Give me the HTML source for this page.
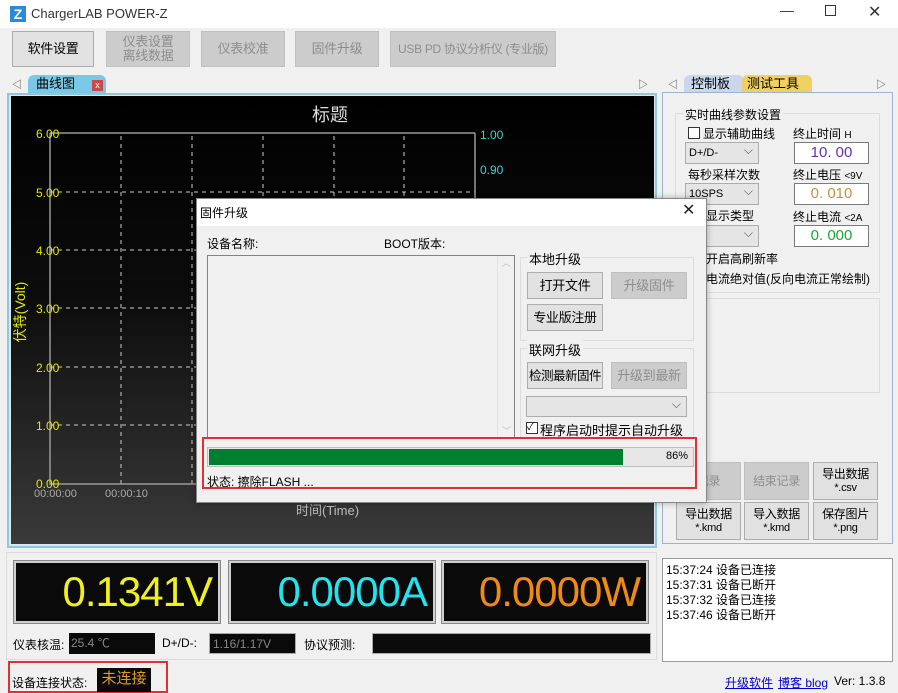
<!DOCTYPE html>
<html><head><meta charset="utf-8"><style>
*{box-sizing:border-box;margin:0;padding:0}
body{width:898px;height:693px;background:#f0f0f0;font-family:"Liberation Sans","Noto Sans CJK SC",sans-serif;font-size:12px;color:#000;position:relative;overflow:hidden}
.a{position:absolute}
.btn{position:absolute;background:#e1e1e1;border:1px solid #adadad;display:flex;flex-direction:column;align-items:center;justify-content:center;text-align:center;font-size:12px;line-height:14px;white-space:nowrap;letter-spacing:-0.3px}
.dis{background:#cccccc;border-color:#bfbfbf;color:#8d8d8d}
.y{color:#e6e600;font-size:12px}
.c{color:#33d6d6;font-size:12px}
.disp{position:absolute;background:#0a0a0a;border:2px solid #cfcfcf;outline:1px solid #888;font-size:42px;text-align:right;padding-right:6px;line-height:58px;font-family:"Liberation Sans",sans-serif;letter-spacing:-1px}
.inp{position:absolute;background:#fff;border:1px solid #7a7a7a;text-align:center;font-size:15px;line-height:20px}
.sel{position:absolute;background:#e5e5e5;border:1px solid #acacac;font-size:11px;line-height:20px;padding-left:3px}
.sel:after{content:"⌵";position:absolute;right:5px;top:-3px;color:#555;font-size:12px}
</style></head><body>
<div class="a" style="left:0;top:0;width:898px;height:28px;background:#fff"></div>
<div class="a" style="left:10px;top:6px;width:16px;height:16px;background:#2a8ad8;color:#fff;font-weight:bold;font-size:14px;line-height:16px;text-align:center">Z</div>
<div class="a" style="left:31px;top:6px;font-size:13px;color:#333">ChargerLAB POWER-Z</div>
<div class="a" style="left:780px;top:2px;font-size:14px;color:#333">—</div>
<div class="a" style="left:825px;top:5px;width:11px;height:11px;border:1px solid #333"></div>
<div class="a" style="left:868px;top:2px;font-size:16px;color:#333">✕</div>
<div class="btn" style="left:12px;top:31px;width:82px;height:36px;font-size:13px">软件设置</div>
<div class="btn dis" style="left:106px;top:31px;width:84px;height:36px;font-size:13px">仪表设置<br>离线数据</div>
<div class="btn dis" style="left:201px;top:31px;width:84px;height:36px;font-size:13px">仪表校准</div>
<div class="btn dis" style="left:295px;top:31px;width:84px;height:36px;font-size:13px">固件升级</div>
<div class="btn dis" style="left:390px;top:31px;width:166px;height:36px;font-size:12px">USB PD 协议分析仪 (专业版)</div>
<div class="a" style="left:12px;top:76px;font-size:10px;color:#444">◁</div>
<div class="a" style="left:28px;top:75px;width:78px;height:18px;background:#79c8e6;border-radius:6px 6px 0 0;font-size:13px;padding-left:8px;line-height:17px">曲线图</div>
<div class="a" style="left:92px;top:80px;width:11px;height:11px;background:#c84a4a;color:#fff;font-size:9px;line-height:10px;text-align:center">x</div>
<div class="a" style="left:638px;top:76px;font-size:10px;color:#444">▷</div>
<div class="a" style="left:7px;top:93px;width:650px;height:455px;border:2px solid #8fc7dc;background:#d8e8ee"></div>
<div class="a" style="left:11px;top:96px;width:643px;height:448px;background:linear-gradient(#000 0%,#0c0c0c 45%,#3a3a3a 100%)"></div>
<div class="a" style="left:312px;top:101px;font-size:18px;color:#ddd">标题</div>
<svg class="a" style="left:0;top:0" width="660" height="550">
<g stroke="#ccc" stroke-dasharray="4,4" stroke-width="1">
<line x1="121" y1="136" x2="121" y2="484"/><line x1="192" y1="136" x2="192" y2="484"/><line x1="263" y1="136" x2="263" y2="484"/><line x1="334" y1="136" x2="334" y2="484"/><line x1="404" y1="136" x2="404" y2="484"/>
<line x1="50" y1="192" x2="475" y2="192"/><line x1="50" y1="250" x2="475" y2="250"/><line x1="50" y1="308" x2="475" y2="308"/><line x1="50" y1="367" x2="475" y2="367"/><line x1="50" y1="425" x2="475" y2="425"/>
</g>
<g stroke="#999" stroke-width="1.5" fill="none"><polyline points="50,133 50,484 475,484"/><line x1="50" y1="133" x2="475" y2="133"/><line x1="475" y1="133" x2="475" y2="484"/></g>
</svg>
<div class="a y" style="left:36px;top:127px">6.00</div>
<div class="a y" style="left:36px;top:186px">5.00</div>
<div class="a y" style="left:36px;top:244px">4.00</div>
<div class="a y" style="left:36px;top:302px">3.00</div>
<div class="a y" style="left:36px;top:361px">2.00</div>
<div class="a y" style="left:36px;top:419px">1.00</div>
<div class="a y" style="left:36px;top:477px">0.00</div>
<div class="a c" style="left:480px;top:128px">1.00</div>
<div class="a c" style="left:480px;top:163px">0.90</div>
<div class="a" style="left:-17px;top:304px;transform:rotate(-90deg);color:#e6e600;font-size:14px;width:74px;text-align:center;line-height:16px">伏特(Volt)</div>
<div class="a" style="left:34px;top:488px;color:#aaa;font-size:11px">00:00:00</div>
<div class="a" style="left:105px;top:488px;color:#aaa;font-size:11px">00:00:10</div>
<div class="a" style="left:296px;top:500px;color:#bbb;font-size:13px">时间(Time)</div>
<div class="a" style="left:668px;top:76px;font-size:10px;color:#444">◁</div>
<div class="a" style="left:684px;top:75px;width:60px;height:18px;background:#c9d7ee;border-radius:6px 6px 0 0;font-size:13px;padding-left:7px;line-height:17px">控制板</div>
<div class="a" style="left:742px;top:75px;width:70px;height:18px;background:#f0d060;border-radius:6px 6px 0 0;font-size:13px;padding-left:5px;line-height:17px">测试工具</div>
<div class="a" style="left:876px;top:76px;font-size:10px;color:#444">▷</div>
<div class="a" style="left:662px;top:92px;width:231px;height:452px;border:1px solid #9cb4cc"></div>
<div class="a" style="left:675px;top:113px;width:205px;height:180px;border:1px solid #dcdcdc"></div>
<div class="a" style="left:683px;top:106px;background:#f0f0f0;padding:0 2px;font-size:12px">实时曲线参数设置</div>
<div class="a" style="left:688px;top:127px;width:12px;height:12px;border:1px solid #333;background:#fff"></div>
<div class="a" style="left:703px;top:125px">显示辅助曲线</div>
<div class="a" style="left:793px;top:125px">终止时间 <span style="font-size:10px">H</span></div>
<div class="sel" style="left:685px;top:142px;width:74px;height:22px">D+/D-</div>
<div class="inp" style="left:794px;top:142px;width:75px;height:22px;color:#6a2fa8">10. 00</div>
<div class="a" style="left:688px;top:166px">每秒采样次数</div>
<div class="a" style="left:793px;top:166px">终止电压 <span style="font-size:10px">&lt;9V</span></div>
<div class="sel" style="left:685px;top:183px;width:74px;height:22px">10SPS</div>
<div class="inp" style="left:794px;top:183px;width:75px;height:22px;color:#c89040">0. 010</div>
<div class="a" style="left:706px;top:207px">显示类型</div>
<div class="a" style="left:793px;top:208px">终止电流 <span style="font-size:10px">&lt;2A</span></div>
<div class="sel" style="left:685px;top:225px;width:74px;height:22px">态</div>
<div class="inp" style="left:794px;top:225px;width:75px;height:22px;color:#1aa838">0. 000</div>
<div class="a" style="left:706px;top:250px">开启高刷新率</div>
<div class="a" style="left:706px;top:270px">电流绝对值(反向电流正常绘制)</div>
<div class="a" style="left:675px;top:298px;width:205px;height:95px;border:1px solid #dcdcdc"></div>
<div class="btn dis" style="left:676px;top:462px;width:65px;height:38px">记录</div>
<div class="btn dis" style="left:744px;top:462px;width:65px;height:38px">结束记录</div>
<div class="btn" style="left:813px;top:462px;width:65px;height:38px"><div>导出数据</div><div style="font-size:11px">*.csv</div></div>
<div class="btn" style="left:676px;top:502px;width:65px;height:38px"><div>导出数据</div><div style="font-size:11px">*.kmd</div></div>
<div class="btn" style="left:744px;top:502px;width:65px;height:38px"><div>导入数据</div><div style="font-size:11px">*.kmd</div></div>
<div class="btn" style="left:813px;top:502px;width:65px;height:38px"><div>保存图片</div><div style="font-size:11px">*.png</div></div>
<div class="a" style="left:196px;top:198px;width:511px;height:305px;background:#f0f0f0;border:1px solid #888;box-shadow:0 0 6px rgba(0,0,0,.3)"></div>
<div class="a" style="left:197px;top:199px;width:509px;height:27px;background:#fff"></div>
<div class="a" style="left:200px;top:204px;font-size:12px">固件升级</div>
<div class="a" style="left:682px;top:200px;font-size:16px;color:#222">✕</div>
<div class="a" style="left:207px;top:235px">设备名称:</div>
<div class="a" style="left:384px;top:235px">BOOT版本:</div>
<div class="a" style="left:207px;top:255px;width:308px;height:183px;border:1px solid #828282;background:#f0f0f0"></div>
<div class="a" style="left:497px;top:256px;width:17px;height:181px;border-left:1px solid #e4e4e4;color:#bbb;font-size:9px;text-align:center">︿<div style="position:absolute;bottom:0;width:17px">﹀</div></div>
<div class="a" style="left:520px;top:257px;width:174px;height:84px;border:1px solid #dcdcdc"></div>
<div class="a" style="left:527px;top:249px;background:#f0f0f0;padding:0 2px;font-size:13px">本地升级</div>
<div class="btn" style="left:527px;top:272px;width:76px;height:27px;font-size:13px">打开文件</div>
<div class="btn dis" style="left:611px;top:272px;width:76px;height:27px;font-size:13px">升级固件</div>
<div class="btn" style="left:527px;top:304px;width:76px;height:27px;font-size:13px">专业版注册</div>
<div class="a" style="left:520px;top:348px;width:174px;height:90px;border:1px solid #dcdcdc"></div>
<div class="a" style="left:527px;top:340px;background:#f0f0f0;padding:0 2px;font-size:13px">联网升级</div>
<div class="btn" style="left:527px;top:362px;width:76px;height:27px;font-size:12.5px;letter-spacing:-0.5px">检测最新固件</div>
<div class="btn dis" style="left:611px;top:362px;width:76px;height:27px;font-size:13px">升级到最新</div>
<div class="sel" style="left:526px;top:396px;width:161px;height:21px"></div>
<div class="a" style="left:526px;top:422px;width:12px;height:12px;border:1px solid #333;background:#fff;font-size:10px;line-height:10px">✓</div>
<div class="a" style="left:540px;top:420px;font-size:13px">程序启动时提示自动升级</div>
<div class="a" style="left:202px;top:437px;width:495px;height:52px;border:2px solid #e03030"></div>
<div class="a" style="left:207px;top:447px;width:487px;height:20px;background:#e6e6e6;border:1px solid #bcbcbc"></div>
<div class="a" style="left:209px;top:449px;width:414px;height:16px;background:#00802f"></div>
<div class="a" style="left:666px;top:450px;font-size:11px">86%</div>
<div class="a" style="left:207px;top:473px;font-size:12px">状态: 擦除FLASH ...</div>
<div class="a" style="left:6px;top:552px;width:651px;height:108px;border:1px solid #dcdcdc"></div>
<div class="disp" style="left:14px;top:561px;width:206px;height:62px;color:#f0f020">0.1341V</div>
<div class="disp" style="left:229px;top:561px;width:206px;height:62px;color:#22e4ee">0.0000A</div>
<div class="disp" style="left:442px;top:561px;width:206px;height:62px;color:#f08a10">0.0000W</div>
<div class="a" style="left:13px;top:636px">仪表核温:</div>
<div class="a" style="left:69px;top:633px;width:86px;height:21px;background:#0a0a0a;color:#888;font-size:12px;line-height:20px;padding-left:2px">25.4 ℃</div>
<div class="a" style="left:162px;top:636px">D+/D-:</div>
<div class="a" style="left:209px;top:633px;width:87px;height:21px;background:#0a0a0a;color:#888;line-height:20px;padding-left:3px;border:1px solid #aaa">1.16/1.17V</div>
<div class="a" style="left:304px;top:636px">协议预测:</div>
<div class="a" style="left:372px;top:633px;width:279px;height:21px;background:#0a0a0a;border:1px solid #aaa"></div>
<div class="a" style="left:662px;top:558px;width:231px;height:104px;background:#fff;border:1px solid #9a9a9a;padding:4px 3px;line-height:15px">15:37:24 设备已连接<br>15:37:31 设备已断开<br>15:37:32 设备已连接<br>15:37:46 设备已断开</div>
<div class="a" style="left:8px;top:661px;width:160px;height:32px;border:2px solid #e03030"></div>
<div class="a" style="left:12px;top:674px">设备连接状态:</div>
<div class="a" style="left:97px;top:668px;width:54px;height:24px;background:#0a0a0a;color:#e09a20;font-size:15px;line-height:22px;text-align:center">未连接</div>
<div class="a" style="left:725px;top:674px;color:#0000cc;text-decoration:underline">升级软件</div>
<div class="a" style="left:778px;top:674px;color:#0000cc;text-decoration:underline">博客 blog</div>
<div class="a" style="left:834px;top:674px">Ver: 1.3.8</div>
</body></html>
